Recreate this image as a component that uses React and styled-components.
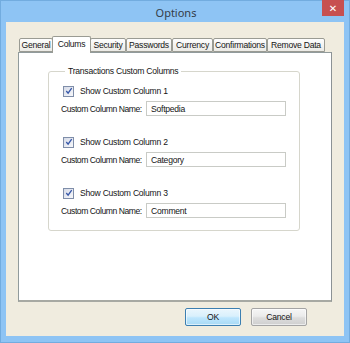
import React from "react";
import styled, { createGlobalStyle } from "styled-components";

const Global = createGlobalStyle`
  html, body { margin: 0; padding: 0; }
  body { width: 350px; height: 343px; overflow: hidden; }
  * { box-sizing: border-box; }
`;

const uiFont = `font-family: "Liberation Sans", Arial, sans-serif; font-size: 8.6px; letter-spacing: -0.25px; color: #151515;`;

const Window = styled.div`
  width: 350px;
  height: 343px;
  background: #8ec4f4;
  border: 1px solid #72acdf;
  display: flex;
  flex-direction: column;
`;

const TitleBar = styled.div`
  height: 21px;
  position: relative;
  display: flex;
  align-items: center;
  justify-content: center;
`;

const Title = styled.div`
  font-family: "Noto Sans", "Open Sans", sans-serif;
  font-size: 11px;
  color: #343d48;
  margin-top: 1px;
  margin-left: 2px;
`;

const CloseButton = styled.div`
  position: absolute;
  right: 5px;
  top: -1px;
  width: 22px;
  height: 16px;
  background: #c75050;
  color: #fff;
  font-family: "DejaVu Sans", sans-serif;
  font-size: 10px;
  font-weight: bold;
  display: flex;
  align-items: center;
  justify-content: center;
`;

const Client = styled.div`
  flex: 1;
  margin: 0 5px 6px 5px;
  background: #f0ecdf;
  display: flex;
  flex-direction: column;
  padding: 14px 12px 10px 12px;
`;

const TabRow = styled.div`
  display: flex;
  align-items: flex-end;
  height: 16px;
  padding-left: 1px;
  position: relative;
  z-index: 2;
`;

const Tab = styled.div`
  ${uiFont}
  width: ${(p) => p.$w}px;
  height: ${(p) => (p.$active ? 17 : 14)}px;
  margin: ${(p) => (p.$active ? "0 -1px -1px -1px" : "0")};
  background: ${(p) => (p.$active ? "#ffffff" : "linear-gradient(#fefefe, #ecebe6)")};
  border: 1px solid #9a9b93;
  border-bottom: ${(p) => (p.$active ? "none" : "1px solid #9a9b93")};
  border-radius: 2px 2px 0 0;
  display: flex;
  align-items: center;
  justify-content: center;
  padding-bottom: ${(p) => (p.$active ? 3 : 0)}px;
  position: relative;
  z-index: ${(p) => (p.$active ? 2 : 1)};
  white-space: nowrap;
`;

const Panel = styled.div`
  width: 314px;
  height: 250px;
  background: #fff;
  border: 1px solid #919b9c;
  border-right-color: #8c9295;
  border-bottom: 2px solid #a7a9a3;
  padding: 13px 0 0 29px;
`;

const Group = styled.fieldset`
  width: 252px;
  height: 165px;
  margin: 0;
  border: 1px solid #d6d6cc;
  border-radius: 3px;
  padding: 7px 0 0 12px;
  display: flex;
  flex-direction: column;
`;

const Legend = styled.legend`
  ${uiFont}
  line-height: 11px;
  padding: 0 3px;
  margin-left: 4px;
`;

const Block = styled.div`
  display: flex;
  flex-direction: column;
  gap: 3px;
  margin-bottom: ${(p) => p.$mb}px;
`;

const CheckRow = styled.label`
  ${uiFont}
  display: flex;
  align-items: center;
  height: 14px;
`;

const Box = styled.span`
  width: 11px;
  height: 11px;
  margin-left: 2px;
  margin-right: 6px;
  border: 1px solid #7f8ea9;
  background: linear-gradient(135deg, #d6dbe8, #f7f8fb);
  display: flex;
  align-items: center;
  justify-content: center;
`;

const FieldRow = styled.div`
  ${uiFont}
  display: flex;
  align-items: center;
  height: 15px;
`;

const FieldLabel = styled.span`
  width: 85px;
  white-space: nowrap;
  letter-spacing: -0.45px;
`;

const Input = styled.div`
  ${uiFont}
  width: 140px;
  height: 15px;
  border: 1px solid #c9cbc6;
  background: #fff;
  padding: 0 0 0 4px;
  display: flex;
  align-items: center;
`;

const ButtonRow = styled.div`
  display: flex;
  justify-content: flex-end;
  gap: 10px;
  padding: 6px 25px 0 0;
`;

const Button = styled.div`
  ${uiFont}
  width: 56px;
  height: 18px;
  border-radius: 2px;
  border: 1px solid ${(p) => (p.$primary ? "#3c7fb1" : "#a4a4a4")};
  background: ${(p) =>
    p.$primary
      ? "linear-gradient(#eaf6fd 0%, #d9f0fc 45%, #bee6fd 55%, #a7d9f5 100%)"
      : "linear-gradient(#f6f6f6 0%, #ebebeb 45%, #dddddd 55%, #cfcfcf 100%)"};
  box-shadow: inset 0 0 0 1px rgba(255, 255, 255, 0.6);
  display: flex;
  align-items: center;
  justify-content: center;
`;

const Check = () => (
  <svg width="8" height="8" viewBox="0 0 8 8">
    <path d="M1.3 4 L3.1 6.2 L6.7 1.2" fill="none" stroke="#3556a8" strokeWidth="1.3" />
  </svg>
);

const tabs = [
  ["General", 34],
  ["Colums", 39],
  ["Security", 36],
  ["Passwords", 46],
  ["Currency", 41],
  ["Confirmations", 54],
  ["Remove Data", 58],
];

const cols = [
  ["Show Custom Column 1", "Softpedia", 19],
  ["Show Custom Column 2", "Category", 19],
  ["Show Custom Column 3", "Comment", 0],
];

export default function App() {
  return (
    <>
      <Global />
      <Window>
        <TitleBar>
          <Title>Options</Title>
          <CloseButton>✕</CloseButton>
        </TitleBar>
        <Client>
          <TabRow>
            {tabs.map(([t, w]) => (
              <Tab key={t} $w={w} $active={t === "Colums"}>
                {t}
              </Tab>
            ))}
          </TabRow>
          <Panel>
            <Group>
              <Legend>Transactions Custom Columns</Legend>
              {cols.map(([label, value, mb]) => (
                <Block key={label} $mb={mb}>
                  <CheckRow>
                    <Box>
                      <Check />
                    </Box>
                    {label}
                  </CheckRow>
                  <FieldRow>
                    <FieldLabel>Custom Column Name:</FieldLabel>
                    <Input>{value}</Input>
                  </FieldRow>
                </Block>
              ))}
            </Group>
          </Panel>
          <ButtonRow>
            <Button $primary>OK</Button>
            <Button>Cancel</Button>
          </ButtonRow>
        </Client>
      </Window>
    </>
  );
}
